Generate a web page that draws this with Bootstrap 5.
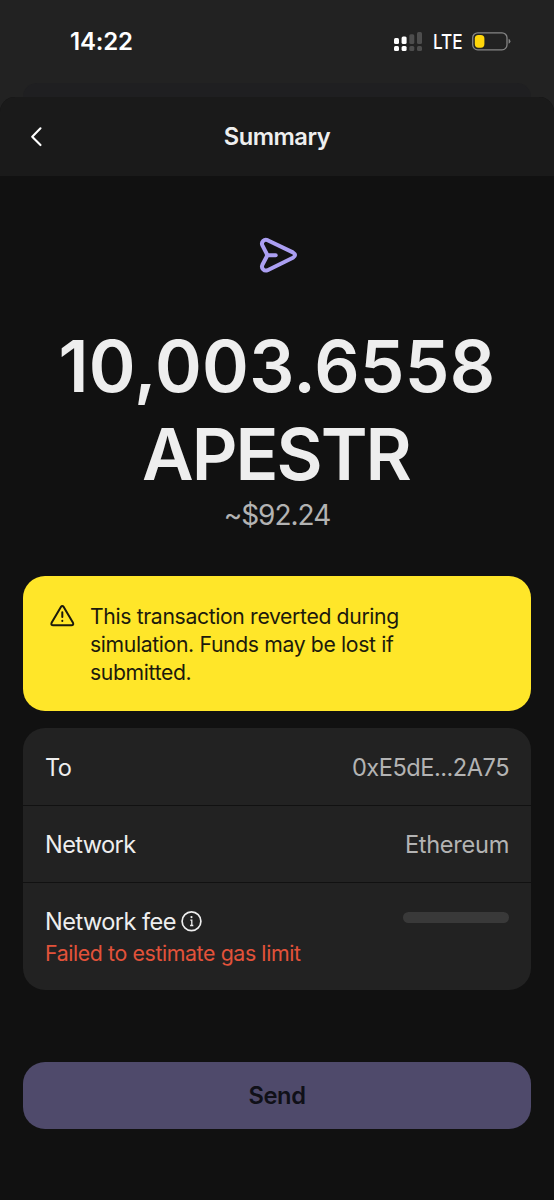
<!DOCTYPE html>
<html lang="en">
<head>
<meta charset="utf-8">
<meta name="viewport" content="width=device-width, initial-scale=1">
<title>Summary</title>
<link href="https://cdn.jsdelivr.net/npm/bootstrap@5.3.0/dist/css/bootstrap.min.css" rel="stylesheet">
<style>
body{background:#222;color:#eee;font-family:Inter,"Liberation Sans",sans-serif;font-size:24px;line-height:28px;height:1200px;overflow:hidden}
svg{display:block;flex:none;overflow:visible}
.statusbar{height:83px;padding:0 43px 0 70px}
.clock{font-weight:600;font-size:24px;letter-spacing:-.2px;color:#fff}
.lte{font-weight:500;font-size:20px;color:#fff;width:30px;margin:1px 9px 0 10px;transform:scaleX(.86);transform-origin:0 50%}
.sheet-behind{height:14px;margin:0 23px;background:#1f1f21;border-radius:14px 14px 0 0}
.sheet{height:1103px;background:#111;border-radius:15px 15px 0 0;overflow:hidden}
.sheet-head{height:79px;background:#1a1a1a;padding:0 23px}
.sheet-title{font-weight:600;font-size:23.7px;letter-spacing:-.5px}
.head-spacer{width:26px}
.sheet-body{padding:60px 23px 0}
.amount{font-weight:600;font-size:71px;line-height:87.5px;margin-top:49px}
.amount-value{letter-spacing:.3px}
.amount-symbol{letter-spacing:-2px;margin-right:2px}
.fiat{font-size:28px;line-height:34px;letter-spacing:-1px;color:#b3b3b3}
.warn{background:#ffe629;color:#1c1a0c;border-radius:22px;height:135px;margin-top:44px;padding:26px 27px;font-size:21.2px;line-height:28.1px;letter-spacing:-.36px;gap:15px}
.details{background:#222;border-radius:22px;margin-top:17px;height:262px}
.line-item{height:77.5px;padding:3px 22px 0 22px;border-bottom:1.5px solid #111;font-size:23.6px;letter-spacing:-.62px}
.line-item:last-child{height:107px;border:0;padding-top:25px}
.fee-label{letter-spacing:-.55px}
.addr{letter-spacing:-.49px}
.chain{letter-spacing:-.3px}
.muted{color:#b3b3b3}
.info{margin-left:5px}
.err{color:#e2523a;font-size:21.3px;letter-spacing:-.38px;margin-top:3px}
.skeleton{width:106px;height:11px;border-radius:6px;background:#393939;margin-top:4px}
.send{background:#4f4a6b!important;color:#101018!important;opacity:1!important;border:0;border-radius:22px;height:67px;margin-top:72px;padding:0;font-weight:600;font-size:23.7px;letter-spacing:-.4px}
</style>
</head>
<body>
<header class="statusbar d-flex align-items-center justify-content-between">
<span class="clock">14:22</span>
<div class="d-flex align-items-center">
<svg width="29" height="20" viewBox="0 0 29 20">
<g fill="#fff"><rect y="6" width="5" height="6" rx="1.5"/><rect x="7.6" y="4.5" width="5" height="7.5" rx="1.5"/><rect y="14" width="5" height="5" rx="1.5"/><rect x="7.6" y="14" width="5" height="5" rx="1.5"/></g>
<g fill="#4d4d4d"><rect x="15.3" y="2.3" width="5" height="9.7" rx="1.5"/><rect x="23" y="0" width="5" height="12" rx="1.5"/><rect x="15.3" y="14" width="5" height="5" rx="1.5"/><rect x="23" y="14" width="5" height="5" rx="1.5"/></g>
</svg>
<span class="lte">LTE</span>
<svg width="39" height="20" viewBox="0 0 39 20"><rect x=".7" y=".8" width="34.3" height="17" rx="5" fill="none" stroke="#858585" stroke-width="1.3"/><rect x="2.8" y="2.9" width="9.6" height="12.8" rx="3.6" fill="#ffd60a"/><path d="M36.6 6.8Q38.4 7.6 38.4 9.3T36.6 11.8Z" fill="#858585"/></svg>
</div>
</header>
<div class="sheet-behind"></div>
<main class="sheet">
<div class="sheet-head d-flex align-items-center">
<svg width="26" height="26" viewBox="0 0 26 26" fill="none" stroke="#fff" stroke-width="2.1" stroke-linecap="round" stroke-linejoin="round"><path d="M17.5 4.3 9.2 12.7l8.3 8.4"/></svg>
<span class="sheet-title flex-fill text-center">Summary</span>
<span class="head-spacer"></span>
</div>
<div class="sheet-body">
<svg class="mx-auto" width="38" height="38" viewBox="0 0 38 38" fill="none" stroke="#ab9ff2" stroke-width="4" stroke-linecap="round" stroke-linejoin="round"><path d="M9.6 4.2 34.9 16.4Q39.2 19.1 34.9 21.8L9.6 34.2C6.2 35.6 2.8 32.2 4.4 28.8L8.5 21Q9.4 19.2 8.5 17.4L4.4 9.4C2.8 6 6.2 2.7 9.6 4.2Z"/><path d="M9.1 19.2H17.7"/></svg>
<h1 class="amount text-center mb-0"><span class="amount-value">10,003.6558</span><br><span class="amount-symbol">APESTR</span></h1>
<div class="fiat text-center">~$92.24</div>
<div class="warn d-flex align-items-start" role="alert">
<svg width="25" height="25" viewBox="0 0 25 25" fill="none" stroke="#1c1a0c" stroke-width="2" stroke-linecap="round" stroke-linejoin="round"><path d="M10.9 4.9Q12.3 3.1 13.7 4.9L23 20.8Q24 23.1 21.3 23.2H3.3Q.6 23.1 1.6 20.8Z"/><path d="M12.3 10.3V15M12.3 18.7V18.9"/></svg>
<div>This transaction reverted during<br>simulation. Funds may be lost if<br>submitted.</div>
</div>
<div class="details">
<div class="line-item d-flex justify-content-between align-items-center"><span>To</span><span class="muted addr">0xE5dE...2A75</span></div>
<div class="line-item d-flex justify-content-between align-items-center"><span>Network</span><span class="muted chain">Ethereum</span></div>
<div class="line-item d-flex justify-content-between align-items-start">
<div>
<div class="d-flex align-items-center"><span class="fee-label">Network fee</span><svg class="info" width="22" height="22" viewBox="0 0 22 22" fill="none" stroke="#eee" stroke-width="1.7"><circle cx="10.5" cy="10.2" r="9.4"/><path d="M9.3 9.1h1.5v5.4M9.1 14.5h3.2" stroke-width="1.3"/><circle cx="10.5" cy="6.1" r="1.1" fill="#eee" stroke="none"/></svg></div>
<div class="err">Failed to estimate gas limit</div>
</div>
<div class="skeleton"></div>
</div>
</div>
<button class="btn send w-100" type="button" disabled>Send</button>
</div>
</main>
</body>
</html>
